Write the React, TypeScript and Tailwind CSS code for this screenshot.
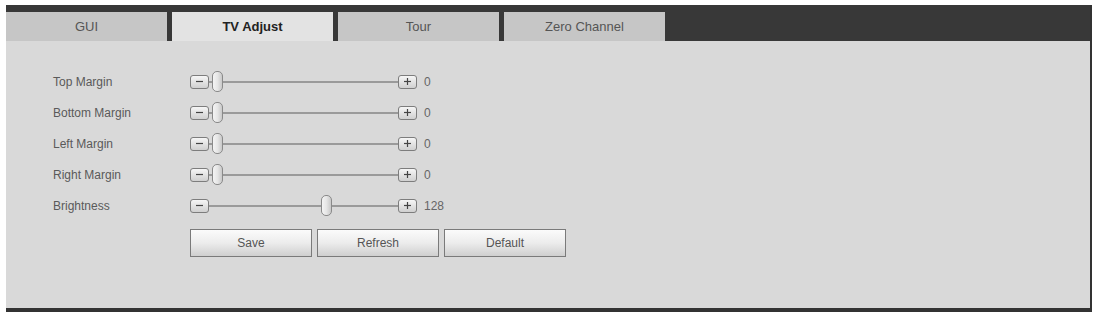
import React from 'react'

const tabs = ['GUI', 'TV Adjust', 'Tour', 'Zero Channel']

const rows = [
  { label: 'Top Margin', value: 0 },
  { label: 'Bottom Margin', value: 0 },
  { label: 'Left Margin', value: 0 },
  { label: 'Right Margin', value: 0 },
  { label: 'Brightness', value: 128 },
]

function StepButton({ sign }: { sign: '-' | '+' }) {
  return (
    <div className="w-[19px] h-[14px] rounded-[3px] border border-[#7d7d7d] bg-gradient-to-b from-[#f6f6f6] to-[#d0d0d0] flex items-center justify-center">
      <svg width="9" height="9" viewBox="0 0 9 9">
        <line x1="1" y1="4.5" x2="8" y2="4.5" stroke="#444" strokeWidth="1.2" />
        {sign === '+' && <line x1="4.5" y1="1" x2="4.5" y2="8" stroke="#444" strokeWidth="1.2" />}
      </svg>
    </div>
  )
}

function Slider({ value }: { value: number }) {
  // ширина дорожки 189px, ползунок 11px
  const left = 3 + Math.round((value / 255) * 218)
  return (
    <div className="flex items-center">
      <StepButton sign="-" />
      <div className="relative w-[189px] h-[22px] flex items-center">
        <div className="w-full h-[2px] bg-[#9a9a9a]" />
        <div
          className="absolute top-0 w-[11px] h-[21px] rounded-[5px] border border-[#8a8a8a] bg-gradient-to-r from-[#f4f4f4] via-[#e6e6e6] to-[#c9c9c9]"
          style={{ left }}
        />
      </div>
      <StepButton sign="+" />
      <span className="ml-[7px] text-[12px] text-[#666]">{value}</span>
    </div>
  )
}

export default function App() {
  return (
    <div className="w-[1095px] h-[312px] bg-white pt-[5px] pl-[6px] pr-[3px] font-['Liberation_Sans',Arial,sans-serif]">
      <div className="h-full flex flex-col bg-[#d9d9d9] border-r-2 border-b-4 border-[#333]">
        <div className="bg-[#383838] pt-[7px] flex gap-[5px]">
          {tabs.map(t => (
            <div
              key={t}
              className={
                t === 'TV Adjust'
                  ? 'w-[161px] h-[29px] flex items-center justify-center bg-[#e3e3e3] text-[13px] font-bold text-[#222]'
                  : 'w-[161px] h-[29px] flex items-center justify-center bg-[#c6c6c6] text-[13px] text-[#555]'
              }
            >
              {t}
            </div>
          ))}
        </div>

        <div className="pt-[25px] pl-[47px]">
          {rows.map(r => (
            <div key={r.label} className="flex items-center h-[31px]">
              <div className="w-[137px] text-[12px] text-[#5a5a5a]">{r.label}</div>
              <Slider value={r.value} />
            </div>
          ))}

          <div className="flex gap-[5px] ml-[137px] mt-[8px]">
            {['Save', 'Refresh', 'Default'].map(b => (
              <button
                key={b}
                className="w-[122px] h-[28px] border border-[#7a7a7a] bg-gradient-to-b from-[#fbfbfb] via-[#ececec] to-[#cfcfcf] text-[12px] text-[#555]"
              >
                {b}
              </button>
            ))}
          </div>
        </div>
      </div>
    </div>
  )
}
